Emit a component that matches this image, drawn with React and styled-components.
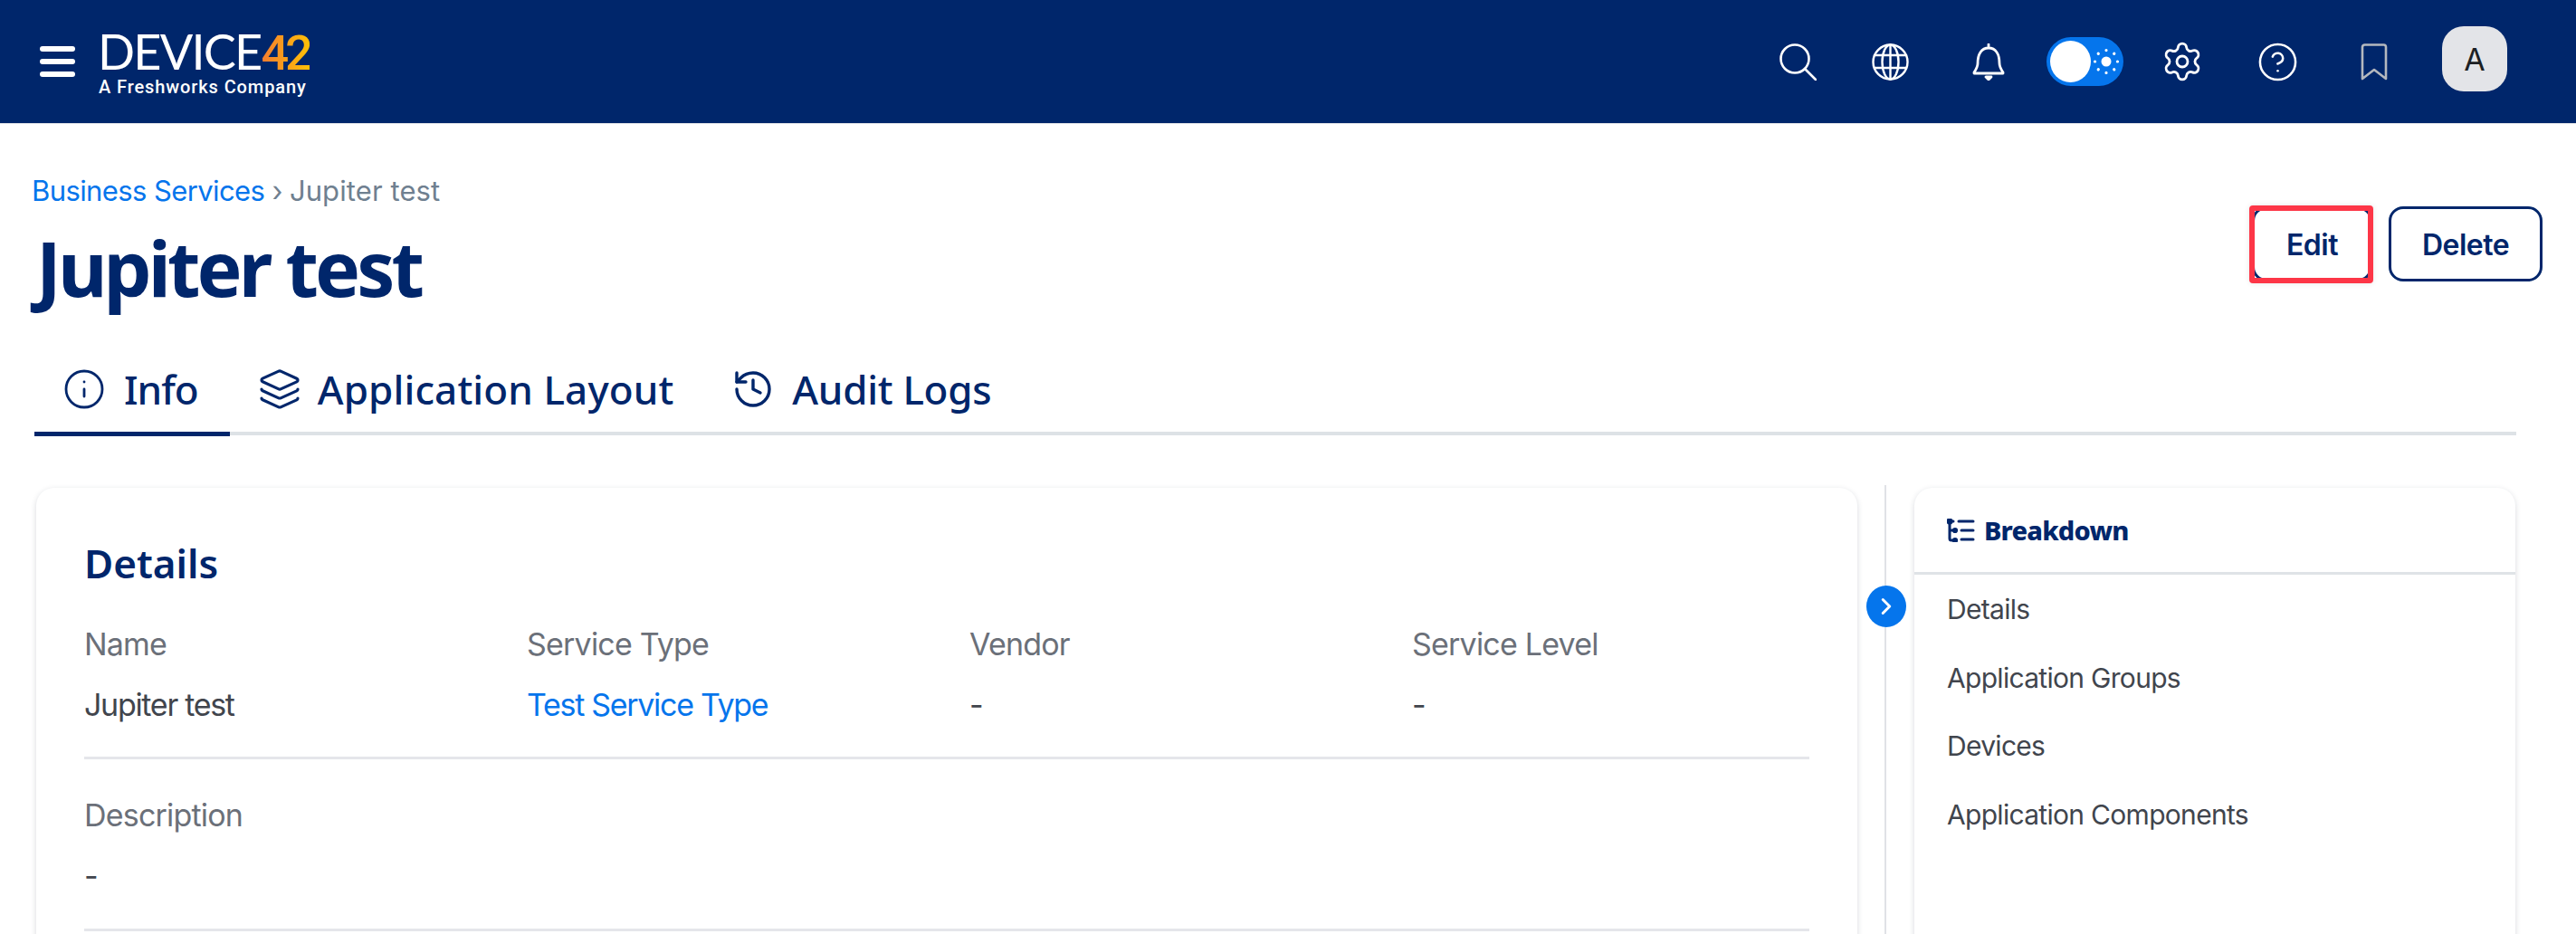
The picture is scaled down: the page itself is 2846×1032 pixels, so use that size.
import React from 'react'
import styled, { createGlobalStyle } from 'styled-components'
import { Settings, CircleHelp, Info, Layers, History, ChevronRight } from 'lucide-react'

const navy = '#00266b'
const blue = '#0575ec'
const bodyFont = `Inter, "Liberation Sans", sans-serif`
const headFont = `"Noto Sans", "Open Sans", sans-serif`

const Global = createGlobalStyle`
  html, body { margin: 0; padding: 0; background: #fff; }
  body { width: 2846px; height: 1032px; overflow: hidden; font-family: ${bodyFont}; }
  * { box-sizing: border-box; }
`

const Page = styled.div`
  width: 2846px;
  height: 1032px;
  overflow: hidden;
  display: flex;
  flex-direction: column;
`

const TopBar = styled.header`
  height: 137px;
  flex: none;
  background: ${navy};
  border-bottom: 1px solid #e3e6ea;
  display: flex;
  align-items: center;
  padding: 0 76px 0 44px;
`

const Burger = styled.div`
  width: 39px;
  display: flex;
  flex-direction: column;
  gap: 8px;
  span {
    height: 6px;
    border-radius: 3px;
    background: #fff;
  }
`

const Logo = styled.div`
  margin: 6px 0 0 25px;
  width: 236px;
  display: flex;
  flex-direction: column;
`

const LogoMark = styled.div`
  font-family: "Lato", sans-serif;
  font-size: 54px;
  line-height: 44px;
  height: 44px;
  font-weight: 400;
  color: #fff;
  letter-spacing: -1.8px;
  white-space: nowrap;
  b {
    font-family: Roboto, sans-serif;
    font-weight: 500;
    letter-spacing: -4px;
    background: linear-gradient(90deg, #f47b30, #ffc107);
    -webkit-background-clip: text;
    background-clip: text;
    color: transparent;
  }
`

const LogoSub = styled.div`
  margin: 5px 0 0 1px;
  font-family: Roboto, sans-serif;
  font-size: 20px;
  line-height: 24px;
  font-weight: 500;
  letter-spacing: 0.9px;
  color: #fff;
  white-space: nowrap;
`

const NavIcons = styled.nav`
  margin-left: auto;
  display: flex;
  align-items: center;
`

const NavIcon = styled.div`
  margin-left: ${p => p.$gap}px;
  display: flex;
  color: ${p => p.$muted ? '#b4b8be' : '#fff'};
`

const Toggle = styled.div`
  margin-left: ${p => p.$gap}px;
  width: 85px;
  height: 54px;
  border-radius: 27px;
  background: ${blue};
  display: flex;
  align-items: center;
  padding: 0 4px;
  gap: 2px;
  i {
    width: 46px;
    height: 46px;
    border-radius: 50%;
    background: #fff;
  }
`

const Avatar = styled.div`
  margin: -6px 0 0 ${p => p.$gap}px;
  width: 72px;
  height: 72px;
  border-radius: 24px;
  background: #e3e4e8;
  color: #1c1f24;
  display: flex;
  align-items: center;
  justify-content: center;
  font-size: 34px;
  font-weight: 400;
`

const PageHead = styled.div`
  display: flex;
  justify-content: space-between;
  padding: 52px 37px 0 35px;
  height: 252px;
  flex: none;
`

const Crumbs = styled.div`
  font-size: 31px;
  line-height: 44px;
  color: #6f8090;
  letter-spacing: -0.6px;
  a { color: ${blue}; }
  span { letter-spacing: 0.1px; }
`

const Title = styled.h1`
  margin: 13px 0 0 5px;
  font-family: ${headFont};
  font-size: 84px;
  line-height: 100px;
  font-weight: 700;
  letter-spacing: -3.9px;
  color: ${navy};
`

const Actions = styled.div`
  display: flex;
  gap: 18px;
  padding-top: 39px;
  align-items: flex-start;
`

const Button = styled.button`
  position: relative;
  width: ${p => p.$w}px;
  height: 83px;
  border: 3px solid ${navy};
  border-radius: 16px;
  background: #fff;
  color: ${navy};
  font-family: ${bodyFont};
  font-size: 32px;
  font-weight: 600;
  letter-spacing: -0.5px;
  padding: 2px 0 0;
`

// red annotation box that sits on top of the Edit button
const Highlight = styled.span`
  position: absolute;
  inset: -4px -4px -5px -6px;
  border: 6px solid #fd3647;
  border-radius: 4px;
  box-shadow: 0 0 6px rgba(0, 0, 0, 0.1);
`

const Tabs = styled.div`
  flex: none;
  margin-left: 38px;
  width: 2742px;
  height: 92px;
  display: flex;
  border-bottom: 4px solid #dde2e6;
`

const Tab = styled.div`
  height: 93px;
  padding: 0 ${p => p.$pad}px 6px 31px;
  display: flex;
  align-items: center;
  gap: ${p => p.$gap}px;
  color: ${navy};
  font-family: ${headFont};
  font-size: 44px;
  font-weight: 500;
  letter-spacing: ${p => p.$track}px;
  border-bottom: 5px solid ${p => p.$active ? navy : 'transparent'};
`

const Columns = styled.div`
  display: flex;
  margin: 58px 0 0 40px;
  flex: none;
`

const Card = styled.section`
  width: ${p => p.$w}px;
  height: 700px;
  flex: none;
  background: #fff;
  border-radius: 20px;
  box-shadow: 0 2px 6px rgba(40, 50, 70, 0.18);
`

const MainCard = styled(Card)`
  padding: 53px 53px 0 53px;
`

const CardTitle = styled.h2`
  margin: 0;
  font-family: ${headFont};
  font-size: 44px;
  line-height: 60px;
  font-weight: 600;
  color: ${navy};
`

const FieldGrid = styled.div`
  display: grid;
  grid-template-columns: repeat(4, 489px);
  margin-top: 37px;
  height: 150px;
  border-bottom: 3px solid #e5e6ea;
`

const DescBlock = styled.div`
  padding-top: 39px;
  height: 190px;
  border-bottom: 3px solid #e5e6ea;
`

const Label = styled.div`
  font-size: 34px;
  line-height: 46px;
  letter-spacing: -0.8px;
  color: #6b7079;
`

const Value = styled.div`
  margin-top: 21px;
  font-size: 34px;
  line-height: 46px;
  letter-spacing: -1.3px;
  color: ${p => p.$link ? blue : '#41454d'};
`

const Rail = styled.div`
  position: relative;
  width: 63px;
  flex: none;
  display: flex;
  justify-content: center;
  &::before {
    content: '';
    position: absolute;
    left: 30px;
    top: -3px;
    bottom: 0;
    width: 2px;
    background: #e0e2e6;
  }
`

const RailButton = styled.div`
  position: absolute;
  left: 10px;
  top: 108px;
  width: 44px;
  height: 46px;
  border-radius: 50%;
  background: ${blue};
  color: #fff;
  display: flex;
  align-items: center;
  justify-content: center;
`

const SideHead = styled.div`
  height: 96px;
  padding: 0 36px;
  display: flex;
  align-items: center;
  gap: 10px;
  border-bottom: 3px solid #dfe3e7;
  font-family: ${headFont};
  font-size: 29px;
  font-weight: 800;
  letter-spacing: -0.8px;
  color: ${navy};
`

const SideList = styled.ul`
  list-style: none;
  margin: 0;
  padding: 0 36px;
`

const SideItem = styled.li`
  height: 75.7px;
  display: flex;
  align-items: center;
  font-size: 30px;
  letter-spacing: -0.7px;
  color: #41454d;
`

const Svg = ({ w, h, vb, sw = 2, children }) => (
  <svg width={w} height={h} viewBox={vb} fill="none" stroke="currentColor" strokeWidth={sw} strokeLinecap="round" strokeLinejoin="round">
    {children}
  </svg>
)

const SearchIcon = () => (
  <Svg w={41} h={41} vb="0 0 41 41" sw={2.6}>
    <circle cx="17" cy="17" r="15.5" />
    <path d="M28 28 L40 40" />
  </Svg>
)

const GlobeIcon = () => (
  <Svg w={41} h={41} vb="0 0 41 41" sw={2.4}>
    <circle cx="20.5" cy="20.5" r="19" />
    <ellipse cx="20.5" cy="20.5" rx="9" ry="19" />
    <path d="M20.5 1.5V39.5M3 13H38M3 27H38" />
  </Svg>
)

const BellIcon = () => (
  <Svg w={36} h={41} vb="0 0 36 41" sw={2.8}>
    <path d="M18 1v4M6 22C6 12 10 5 18 5s12 7 12 17c0 4 2 7 4 10v1H2v-1c2-3 4-6 4-10zM2 33h32" />
    <path d="M15 37h6l-3 3z" fill="currentColor" />
  </Svg>
)

const SunIcon = () => (
  <Svg w={30} h={30} vb="0 0 30 30" sw={3.2}>
    <circle cx="15" cy="15" r="5.5" fill="currentColor" stroke="none" />
    <path d="M15 2.5v.1M15 27.4v.1M2.5 15h.1M27.4 15h.1M6.2 6.2l.1.1M23.7 23.7l.1.1M6.2 23.8l.1-.1M23.7 6.3l.1-.1" />
  </Svg>
)

const BookmarkIcon = () => (
  <Svg w={30} h={41} vb="0 0 30 41" sw={2.6}>
    <path d="M2 39V4a2.5 2.5 0 0 1 2.5-2.5h21A2.5 2.5 0 0 1 28 4v35L15 29z" />
  </Svg>
)

const BreakdownIcon = () => (
  <Svg w={31} h={26} vb="0 0 31 26" sw={3}>
    <path d="M3 3v19a2 2 0 0 0 2 2h4M3 13h6M3 3h4M13 3h16M16 13h13M16 23h13" />
    <circle cx="3" cy="3" r="2" fill="currentColor" />
    <circle cx="9" cy="13" r="1.6" fill="currentColor" />
    <circle cx="9" cy="24" r="1.6" fill="currentColor" />
  </Svg>
)

const fields = [
  { label: 'Name', value: 'Jupiter test' },
  { label: 'Service Type', value: 'Test Service Type', link: true },
  { label: 'Vendor', value: '-' },
  { label: 'Service Level', value: '-' },
]

const sideLinks = ['Details', 'Application Groups', 'Devices', 'Application Components']

const App = () => {
  return (
    <Page>
      <Global />
      <TopBar>
        <Burger><span /><span /><span /></Burger>
        <Logo>
          <LogoMark>DEVICE<b>42</b></LogoMark>
          <LogoSub>A Freshworks Company</LogoSub>
        </Logo>
        <NavIcons>
          <NavIcon $gap={0}><SearchIcon /></NavIcon>
          <NavIcon $gap={61}><GlobeIcon /></NavIcon>
          <NavIcon $gap={70}><BellIcon /></NavIcon>
          <Toggle $gap={46}><i /><NavIcon $gap={0}><SunIcon /></NavIcon></Toggle>
          <NavIcon $gap={41}><Settings size={48} strokeWidth={1.4} /></NavIcon>
          <NavIcon $gap={58}><CircleHelp size={47} strokeWidth={1.3} /></NavIcon>
          <NavIcon $gap={68} $muted><BookmarkIcon /></NavIcon>
          <Avatar $gap={60}>A</Avatar>
        </NavIcons>
      </TopBar>

      <PageHead>
        <div>
          <Crumbs><a>Business Services</a> › <span>Jupiter test</span></Crumbs>
          <Title>Jupiter test</Title>
        </div>
        <Actions>
          <Button $w={133}>Edit<Highlight /></Button>
          <Button $w={170}>Delete</Button>
        </Actions>
      </PageHead>

      <Tabs>
        <Tab $active $pad={35} $gap={20} $track={-1}><Info size={48} strokeWidth={1.4} />Info</Tab>
        <Tab $pad={33} $gap={18} $track={0.1}><Layers size={48} strokeWidth={1.6} />Application Layout</Tab>
        <Tab $pad={34} $gap={19} $track={-0.3}><History size={48} strokeWidth={1.7} />Audit Logs</Tab>
      </Tabs>

      <Columns>
        <MainCard $w={2012}>
          <CardTitle>Details</CardTitle>
          <FieldGrid>
            {fields.map(f => (
              <div key={f.label}>
                <Label>{f.label}</Label>
                <Value $link={f.link}>{f.value}</Value>
              </div>
            ))}
          </FieldGrid>
          <DescBlock>
            <Label>Description</Label>
            <Value>-</Value>
          </DescBlock>
        </MainCard>
        <Rail>
          <RailButton><ChevronRight size={30} strokeWidth={2.4} /></RailButton>
        </Rail>
        <Card $w={664}>
          <SideHead><BreakdownIcon />Breakdown</SideHead>
          <SideList>
            {sideLinks.map(l => <SideItem key={l}>{l}</SideItem>)}
          </SideList>
        </Card>
      </Columns>
    </Page>
  )
}

export default App
